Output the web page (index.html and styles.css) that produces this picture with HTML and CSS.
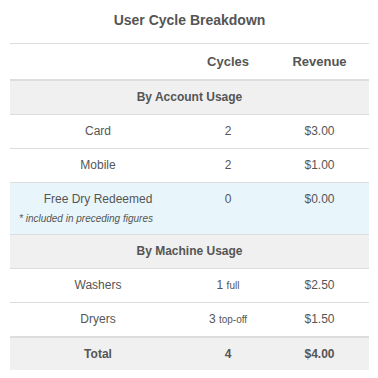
FILE: index.html
```html
<!DOCTYPE html>
<html>
<head>
<meta charset="utf-8">
<link rel="stylesheet" href="styles.css">
</head>
<body>
<div class="panel">
  <div class="title">User Cycle Breakdown</div>
  <table class="breakdown">
    <colgroup>
      <col class="c-label">
      <col class="c-cycles">
      <col class="c-rev">
    </colgroup>
    <thead>
      <tr><th></th><th>Cycles</th><th>Revenue</th></tr>
    </thead>
    <tbody>
      <tr class="section"><td colspan="3">By Account Usage</td></tr>
      <tr><td>Card</td><td>2</td><td>$3.00</td></tr>
      <tr><td>Mobile</td><td>2</td><td>$1.00</td></tr>
      <tr class="info"><td>Free Dry Redeemed<span class="note">* included in preceding figures</span></td><td>0</td><td>$0.00</td></tr>
      <tr class="section"><td colspan="3">By Machine Usage</td></tr>
      <tr><td>Washers</td><td>1 <span class="unit">full</span></td><td>$2.50</td></tr>
      <tr><td>Dryers</td><td>3 <span class="unit">top-off</span></td><td>$1.50</td></tr>
    </tbody>
    <tfoot>
      <tr class="total"><td>Total</td><td>4</td><td>$4.00</td></tr>
    </tfoot>
  </table>
</div>
</body>
</html>
```

FILE: styles.css
```css
html, body {
  margin: 0;
  padding: 0;
  background: #fff;
}
body {
  font-family: "Liberation Sans", Arial, sans-serif;
  color: #555;
}
.panel {
  padding: 10px 9px 0 10px;
}
.title {
  font-size: 14px;
  font-weight: bold;
  line-height: 20px;
  text-align: center;
  margin-bottom: 13px;
}
.breakdown {
  width: 359px;
  border-collapse: collapse;
  table-layout: fixed;
  font-size: 12px;
  line-height: 17px;
}
.c-label { width: 176px; }
.c-cycles { width: 84px; }
.c-rev { width: 99px; }
.breakdown th,
.breakdown td {
  padding: 8px;
  text-align: center;
  vertical-align: top;
  border-top: 1px solid #ddd;
}
.breakdown thead th {
  font-size: 13px;
  line-height: 19px;
  font-weight: bold;
  border-bottom: 2px solid #ddd;
}
.breakdown .section td {
  background: #f0f0f0;
  font-weight: bold;
}
.breakdown .info td {
  background: #e8f5fb;
}
.note {
  display: block;
  text-align: left;
  font-size: 10px;
  font-style: italic;
  line-height: 15px;
  margin-top: 3px;
  margin-left: 1px;
  white-space: nowrap;
}
.unit {
  font-size: 10px;
}
.breakdown tfoot td {
  border-top: 2px solid #ddd;
  background: #f0f0f0;
  font-weight: bold;
  padding-bottom: 7px;
}
```
